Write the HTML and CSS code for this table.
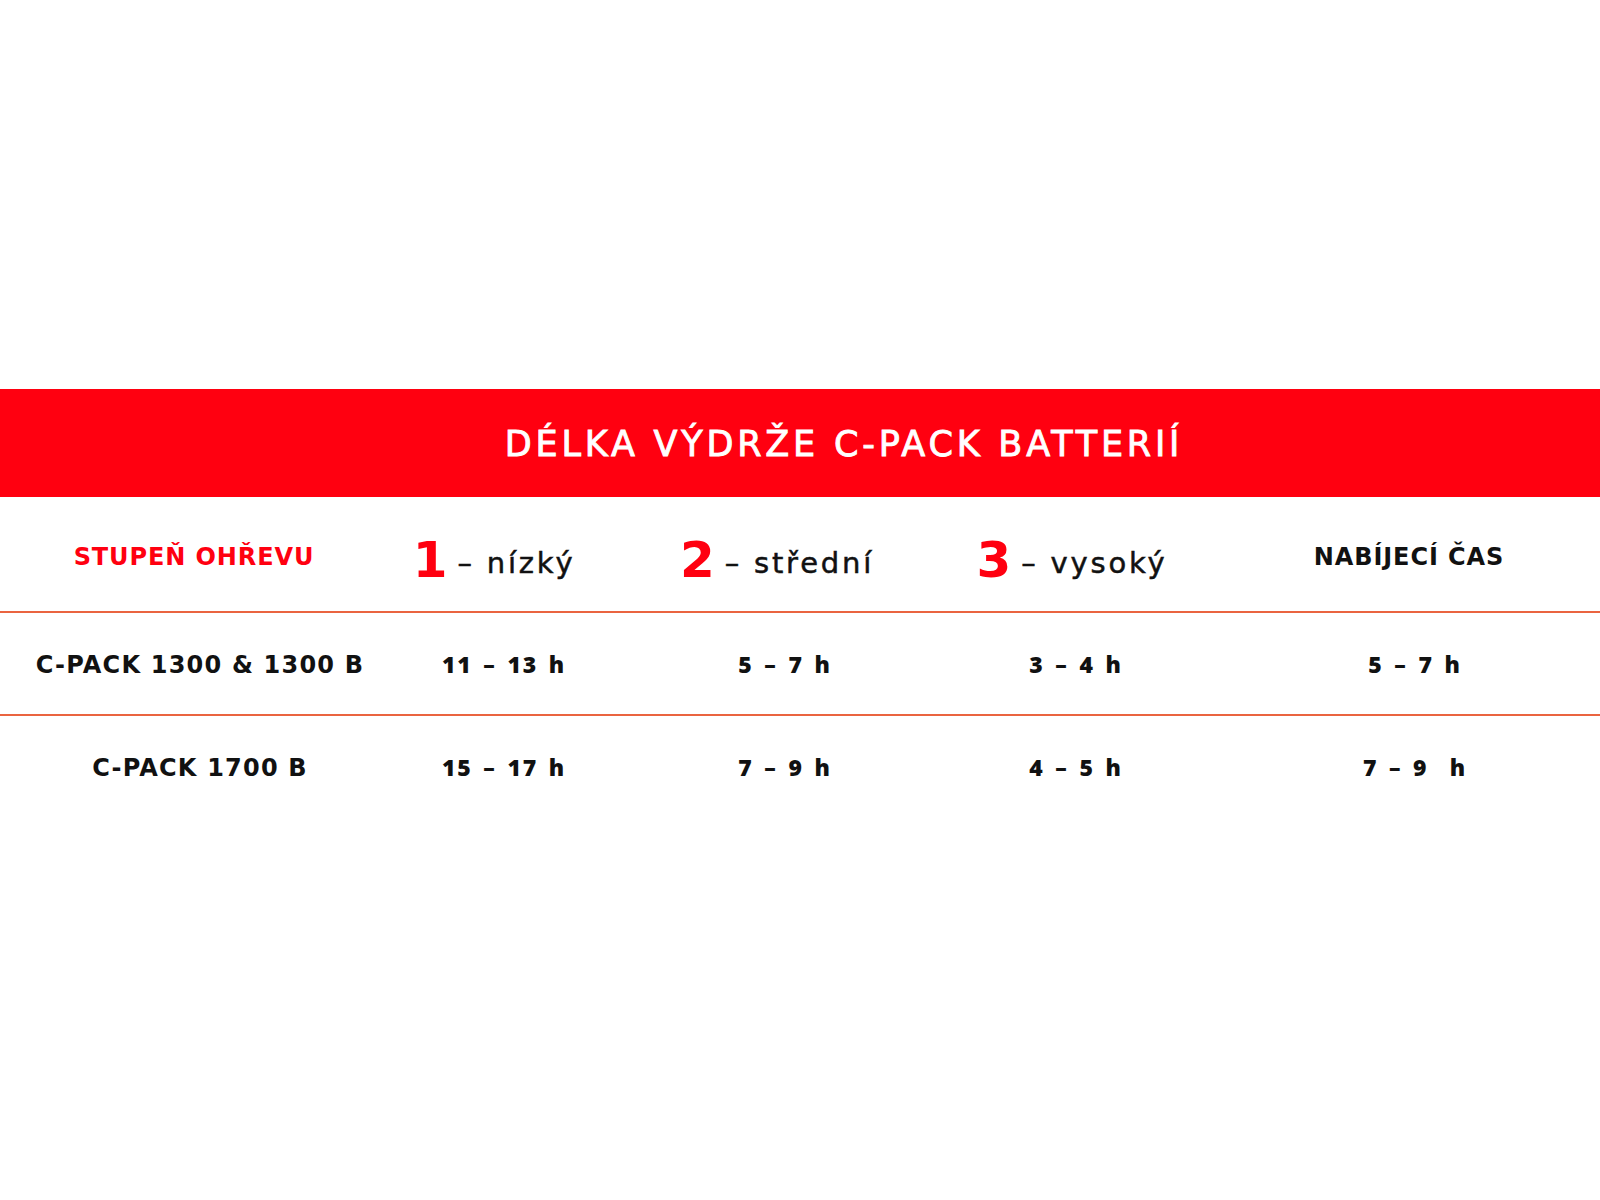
FILE: index.html
```html
<!DOCTYPE html>
<html lang="cs">
<head>
<meta charset="utf-8">
<title>Délka výdrže C-PACK batterií</title>
<link rel="stylesheet" href="styles.css">
</head>
<body>
<main class="page">
  <div class="banner"><h1 class="title">DÉLKA VÝDRŽE C-PACK BATTERIÍ</h1></div>
  <div class="table">
    <div class="row head">
      <div class="cell c1"><span class="lbl red">STUPEŇ OHŘEVU</span></div>
      <div class="cell c2"><span class="lvl"><span class="num">1</span><span class="lvltxt">– nízký</span></span></div>
      <div class="cell c3"><span class="lvl"><span class="num">2</span><span class="lvltxt">– střední</span></span></div>
      <div class="cell c4"><span class="lvl"><span class="num">3</span><span class="lvltxt">– vysoký</span></span></div>
      <div class="cell c5"><span class="lbl">NABÍJECÍ ČAS</span></div>
    </div>
    <div class="row data">
      <div class="cell c1">C-PACK 1300 &amp; 1300 B</div>
      <div class="cell c2">11 – 13 h</div>
      <div class="cell c3">5 – 7 h</div>
      <div class="cell c4">3 – 4 h</div>
      <div class="cell c5">5 – 7 h</div>
    </div>
    <div class="row data last">
      <div class="cell c1">C-PACK 1700 B</div>
      <div class="cell c2">15 – 17 h</div>
      <div class="cell c3">7 – 9 h</div>
      <div class="cell c4">4 – 5 h</div>
      <div class="cell c5">7 – 9&nbsp; h</div>
    </div>
  </div>
</main>
</body>
</html>
```
FILE: styles.css
```css
html, body {
  margin: 0;
  padding: 0;
  background: #ffffff;
}
body {
  font-family: "Open Sans", Roboto, "Liberation Sans", sans-serif;
  color: #111111;
}
.page {
  padding-top: 389px;
}
.banner {
  height: 108px;
  background: #ff0010;
  display: flex;
  align-items: center;
  justify-content: center;
}
.title {
  margin: 0;
  padding-left: 88px;
  color: #ffffff;
  font-family: "DejaVu Sans", "Open Sans", sans-serif;
  font-size: 35px;
  font-weight: 400;
  letter-spacing: 3.8px;
  line-height: 1;
  -webkit-text-stroke: 0.9px #ffffff;
  position: relative;
  top: 1px;
}
.row {
  display: grid;
  grid-template-columns: 400px 200px 370px 212px 1fr;
  align-items: center;
  border-bottom: 2px solid #ea6440;
}
.row.head {
  height: 114px;
}
.row.data {
  height: 103px;
  box-sizing: border-box;
  font-weight: 800;
  font-size: 23px;
  letter-spacing: 1.8px;
  word-spacing: 3px;
}
.row.last {
  padding-bottom: 2px;
  border-bottom: none;
}
.data .c1 {
  font-family: "DejaVu Sans", "Open Sans", sans-serif;
  font-weight: 700;
  font-size: 24px;
  letter-spacing: 1.2px;
  word-spacing: 0;
  position: relative;
  top: 1px;
}
.data .c2 {
  padding-left: 8px;
}
.cell {
  text-align: center;
  white-space: nowrap;
}
.c5 {
  padding-left: 48px;
}
.head .c1 { padding-right: 12px; }
.head .c5 { padding-left: 36px; }
.lbl {
  font-family: "DejaVu Sans", "Open Sans", sans-serif;
  font-size: 24px;
  font-weight: 700;
  letter-spacing: 0.9px;
  color: #111111;
  position: relative;
  top: 3px;
}
.lbl.red {
  color: #ff0010;
}
.lvl {
  display: inline-flex;
  align-items: baseline;
  gap: 10px;
  position: relative;
  top: 6px;
}
.num {
  color: #ff0010;
  font-family: "DejaVu Sans", "Open Sans", sans-serif;
  font-size: 50px;
  font-weight: 700;
  line-height: 1;
}
.lvltxt {
  font-family: "DejaVu Sans", "Open Sans", sans-serif;
  font-size: 29px;
  font-weight: 400;
  letter-spacing: 2.8px;
  -webkit-text-stroke: 0.5px #111111;
  position: relative;
  top: -4px;
}
.head .c2 .lvl { left: -6px; }
.head .c3 .lvl { left: -8px; }
.head .c4 .lvl { left: -4px; }
```
